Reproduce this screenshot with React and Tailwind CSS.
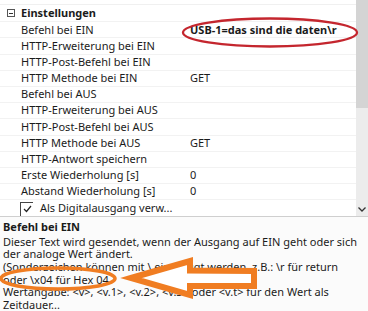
import React from 'react';

const rows = [
  { label: 'Befehl bei EIN', value: 'USB-1=das sind die daten\\r', bold: true },
  { label: 'HTTP-Erweiterung bei EIN' },
  { label: 'HTTP-Post-Befehl bei EIN' },
  { label: 'HTTP Methode bei EIN', value: 'GET' },
  { label: 'Befehl bei AUS' },
  { label: 'HTTP-Erweiterung bei AUS' },
  { label: 'HTTP-Post-Befehl bei AUS' },
  { label: 'HTTP Methode bei AUS', value: 'GET' },
  { label: 'HTTP-Antwort speichern' },
  { label: 'Erste Wiederholung [s]', value: '0' },
  { label: 'Abstand Wiederholung [s]', value: '0' },
];

const lines = [
  'Dieser Text wird gesendet, wenn der Ausgang auf EIN geht oder sich',
  'der analoge Wert ändert.',
  '(Sonderzeichen können mit \\ eingefügt werden, z.B.: \\r für return',
  'oder \\x04 für Hex 04',
  'Wertangabe: <v>, <v.1>, <v.2>, <v.3> oder <v.t> für den Wert als',
  'Zeitdauer...',
];

export default function App() {
  return (
    <div className="relative w-[368px] h-[311px] overflow-hidden bg-white font-['Noto_Sans',sans-serif] text-[11px] text-[#1b1b1b]">
      <div className="flex h-[216px]">
        {/* property grid */}
        <div className="flex-1 overflow-hidden">
          <div className="h-[5px] border-b border-[#f0f0f0]" />
          <div className="h-[16.2px] flex items-center">
            <div className="w-[21px] flex justify-center pl-[1px]">
              <div className="w-[8px] h-[8px] border border-[#555] flex items-center justify-center">
                <div className="w-[4px] h-px bg-[#333]" />
              </div>
            </div>
            <span className="font-bold">Einstellungen</span>
          </div>
          {rows.map((r) => (
            <div key={r.label} className="h-[16.2px] flex items-center border-t border-[#f2f2f2]">
              <div className="w-[184px] pl-[21px] whitespace-nowrap">{r.label}</div>
              <div className={`flex-1 pl-[6px] whitespace-nowrap ${r.bold ? 'font-bold' : ''}`}>{r.value}</div>
            </div>
          ))}
          <div className="h-[16.2px] flex items-start border-t border-[#f2f2f2] pt-[2px]">
            <div className="ml-[20px] w-[13px] h-[14px] border-l border-t border-[#444] flex items-start justify-center pt-[2px]">
              <svg width="9" height="8" viewBox="0 0 9 8">
                <path d="M1 4 L3.5 6.5 L8 1" fill="none" stroke="#222" strokeWidth="1.2" />
              </svg>
            </div>
            <span className="ml-[7px] leading-[11px]">Als Digitalausgang verw...</span>
          </div>
        </div>
        {/* scrollbar */}
        <div className="w-[12px] bg-[#ececec] flex flex-col">
          <div className="h-[108px] bg-[#d4d4d4]" />
          <div className="flex-1" />
          <div className="h-[14px] flex items-center justify-center">
            <svg width="8" height="5" viewBox="0 0 8 5">
              <path d="M0.5 0.5 L4 4 L7.5 0.5" fill="none" stroke="#333" strokeWidth="1.3" />
            </svg>
          </div>
        </div>
      </div>

      {/* description */}
      <div className="h-[95px] border-t border-[#cfcfcf] bg-[#fbfbfb] pl-[3px] pt-[3px]">
        <div className="font-bold leading-[14px]">Befehl bei EIN</div>
        <div className="mt-[1.5px] leading-[12.7px]">
          {lines.map((l) => (
            <div key={l} className="whitespace-nowrap">{l}</div>
          ))}
        </div>
      </div>

      {/* annotations */}
      <svg className="absolute inset-0 pointer-events-none" width="368" height="311" viewBox="0 0 368 311">
        <ellipse cx="270" cy="32.5" rx="87" ry="14" fill="none" stroke="#c4262e" strokeWidth="2.3" />
        <ellipse cx="58" cy="278.5" rx="57" ry="10.5" fill="none" stroke="#f07d22" strokeWidth="3.5" />
        <polygon
          points="131,278 190,261 190,270.5 254,271 254,286 190,286 190,295"
          fill="white"
          stroke="#f07d22"
          strokeWidth="6"
          strokeLinejoin="miter"
        />
      </svg>
    </div>
  );
}
